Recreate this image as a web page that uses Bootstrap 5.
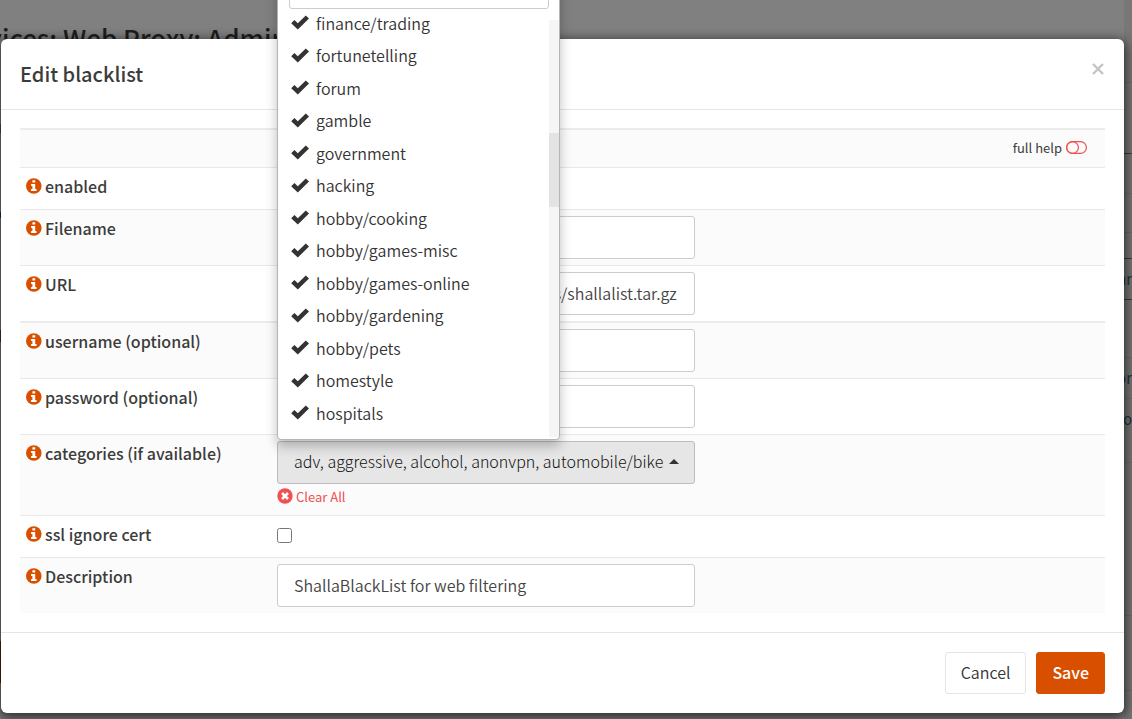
<!DOCTYPE html>
<html lang="en">
<head>
<meta charset="utf-8">
<meta name="viewport" content="width=device-width, initial-scale=1">
<title>Services: Web Proxy: Administration</title>
<link href="https://cdn.jsdelivr.net/npm/bootstrap@5.3.0/dist/css/bootstrap.min.css" rel="stylesheet">
<style>
  body { font-family: "Source Sans Pro", "Noto Sans CJK SC", sans-serif; font-size: 16px; line-height: 24px; font-weight: 350; color: #3c3c3b; background: #808080; overflow: hidden; }
  /* dimmed page under the dialog */
  .under { position: absolute; inset: 0; overflow: hidden; z-index: 0; }
  .under h1 { font-size: 26px; line-height: 32px; font-weight: 500; color: #1e1e1e; margin: 22px 0 0; white-space: nowrap; display: flex; }
  .under h1 span { margin-left: -54px; }
  .edge { position: absolute; top: 0; bottom: 0; display: flex; flex-direction: column; }
  .edge-l { left: 0; width: 8px; }
  .edge-r { right: 0; width: 8px; font-size: 15px; line-height: 20px; font-weight: 400; background: #787877; }
  .edge-r div { border-bottom: 1px solid #6d6d6d; display: flex; align-items: center; justify-content: flex-end; overflow: hidden; color: #28333f; flex-shrink: 0; }
  .edge-r .strong-line { border-bottom-color: #3c3c3c; }
  .dialog { position: relative; z-index: 1; margin: 39px 8px 6px 1px; background: #fff; border-radius: 6px; box-shadow: 0 3px 12px 2px rgba(0,0,0,.65); }
  .dialog-head { padding: 19px; height: 71px; border-bottom: 1px solid #e5e5e5; }
  .dialog-head h2 { font-size: 20px; line-height: 32px; font-weight: 500; margin: 0; }
  .x-btn { border: 0; background: none; padding: 0; line-height: 0; margin: 5px 1px 0 0; }
  .dialog-main { padding: 18px 19px 19px; }
  .form-grid { margin: 0; color: #3c3c3b; --bs-table-color: #3c3c3b; table-layout: fixed; border-top: 2px solid #ebebeb; }
  .form-grid td, .form-grid th { border: 0; border-top: 1px solid #e8e8e8; padding: 6px; vertical-align: top; font-weight: 350; box-shadow: none; background: #fff; }
  .form-grid th { font-weight: 500; }
  .form-grid tr:nth-child(odd) > * { background: #fbfbfb; }
  .form-grid tr:first-child > * { border-top: 0; padding: 6px 18px; height: 38px; line-height: 20px; }
  .form-grid .group-start > * { border-top: 2px solid #ebebeb; }
  .form-grid .c1 { width: 251px; }
  .form-grid th label { display: flex; align-items: center; gap: 3px; line-height: 24px; }
  .slim { height: 42px; }
  .help { font-size: 13px; color: #3c3c3b; text-decoration: none; line-height: 20px; display: inline-flex; align-items: center; gap: 4px; font-weight: 400; }
  .help svg { margin-top: -2px; }
  .field { width: 418px; max-width: 100%; height: 43px; padding: 6px 16px; border: 1px solid #ccc; border-radius: 3px; font-size: 16px; color: #444; font-weight: 350; }
  .picker { position: relative; width: 418px; max-width: 100%; }
  .picker-btn { width: 100%; height: 43px; border: 1px solid #bdbdbd; background: #e6e6e6; color: #111; border-radius: 3px; padding: 0 15px 2px 16px; display: flex; align-items: center; gap: 5px; font-size: 16px; font-weight: 300; }
  .picker-btn > span { flex: 1; overflow: hidden; white-space: nowrap; text-align: left; }
  .clear { font-size: 13px; line-height: 22px; color: #f05050; text-decoration: none; display: flex; align-items: center; gap: 3px; margin-top: 2px; font-weight: 400; }
  .clear svg { margin-top: -2px; }
  .tick { width: 15px; height: 15px; margin: 6px 0 0; display: block; }
  .drop { position: absolute; left: 0; bottom: calc(100% + 1px); width: 283px; background: #fff; border: 1px solid #b5b5b5; border-radius: 4px; box-shadow: 0 6px 12px rgba(0,0,0,.25); z-index: 5; padding: 8px 0 1px; }
  .drop .field { display: block; margin: 0 10px 0 11px; width: calc(100% - 21px); }
  .drop-body { display: flex; height: 429px; overflow: hidden; }
  .drop-list { flex: 1; list-style: none; margin: -2px 0 0; padding: 0 0 0 13px; height: 455px; display: grid; grid-template-rows: repeat(14, 1fr); }
  .drop-list a { display: flex; align-items: center; gap: 7px; height: 100%; color: #333; text-decoration: none; line-height: 24px; }
  .track { width: 10px; background: #f5f5f5; margin: 11px 0 1px; padding-top: 113px; }
  .thumb { height: 74px; background: #e3e3e3; }
  .dialog-foot { border-top: 1px solid #e5e5e5; padding: 19px; display: flex; justify-content: flex-end; gap: 10px; }
  .act { height: 42px; border-radius: 3px; font-size: 16px; padding: 0 15px 2px; border: 1px solid #e5e5e5; background: #fff; color: #333; font-weight: 350; }
  .act-main { background: #d94f00; border-color: #d94f00; color: #fff; font-weight: 500; }
</style>
</head>
<body>
<svg width="0" height="0" class="position-absolute" aria-hidden="true">
  <symbol id="info" viewBox="0 0 16 16"><circle cx="7.8" cy="8" r="7.8" fill="#d94f00"/><path d="M6.4 2.2h2.8v2.3H6.4zM5.1 6h4.1v4.9h1.3v2H5.1v-2h1.3V8H5.1z" fill="#fff"/></symbol>
  <symbol id="ok" viewBox="0 0 18 15"><path d="M0.2 8.2 3.4 5l3.4 3.3L14.8.4 18 3.4 6.8 14.6z" fill="#333"/></symbol>
</svg>

<div class="under" aria-hidden="true">
  <h1><span>Services: Web Proxy: Administration</span></h1>
  <div class="edge edge-l">
    <div style="height:124px"></div><div style="height:9px;background:#6b4a20"></div>
    <div style="height:79px"></div><div style="height:6px;background:#103a60"></div>
    <div style="height:112px"></div><div style="height:12px;background:#5a2c0c"></div>
    <div style="height:299px"></div><div style="height:42px;background:#5a2200"></div>
  </div>
  <div class="edge edge-r">
    <div style="height:83px"></div><div class="strong-line" style="height:71px"></div>
    <div style="height:40px"></div><div style="height:39px"></div>
    <div class="strong-line" style="height:26px"></div><div class="strong-line" style="height:41px">ar</div>
    <div style="height:58px"></div><div style="height:41px">or</div>
    <div style="height:64px"><span class="pb-4">o</span></div><div style="height:153px"></div><div style="height:75px"></div>
  </div>
</div>

<main class="dialog" role="dialog" aria-labelledby="dlg-title">
  <header class="dialog-head d-flex justify-content-between align-items-start">
    <h2 id="dlg-title">Edit blacklist</h2>
    <button type="button" class="x-btn" aria-label="Close"><svg width="12" height="12" viewBox="0 0 12 12"><path d="M1 1l10 10M11 1L1 11" stroke="#c4c4c4" stroke-width="2.4"/></svg></button>
  </header>
  <div class="dialog-main">
    <table class="table form-grid">
      <colgroup><col class="c1"><col></colgroup>
      <tbody>
        <tr><td colspan="2" class="text-end"><a href="#" class="help">full help <svg width="21" height="13" viewBox="0 0 21 13" fill="none" stroke="#f05050" stroke-width="1.2"><rect x=".6" y=".6" width="19.8" height="11.8" rx="5.9"/><circle cx="6.5" cy="6.5" r="5.9"/></svg></a></td></tr>
        <tr class="slim"><th><label for="en"><svg width="16" height="16"><use href="#info"/></svg>enabled</label></th><td><input id="en" type="checkbox" class="tick" checked></td></tr>
        <tr><th><label for="fn"><svg width="16" height="16"><use href="#info"/></svg>Filename</label></th><td><input id="fn" type="text" class="field"></td></tr>
        <tr><th><label for="url"><svg width="16" height="16"><use href="#info"/></svg>URL</label></th><td><input id="url" type="text" class="field" value="http://www.shallalist.de/Downloads/shallalist.tar.gz"></td></tr>
        <tr class="group-start"><th><label for="us"><svg width="16" height="16"><use href="#info"/></svg>username (optional)</label></th><td><input id="us" type="text" class="field"></td></tr>
        <tr><th><label for="pw"><svg width="16" height="16"><use href="#info"/></svg>password (optional)</label></th><td><input id="pw" type="password" class="field"></td></tr>
        <tr><th><label for="cat"><svg width="16" height="16"><use href="#info"/></svg>categories (if available)</label></th><td>
          <div class="picker">
            <button id="cat" type="button" class="picker-btn"><span>adv, aggressive, alcohol, anonvpn, automobile/bikes</span><svg width="10" height="5" viewBox="0 0 10 5"><path d="M0 5 5 0l5 5z" fill="#333"/></svg></button>
            <div class="drop">
              <input type="text" class="field" aria-label="Search">
              <div class="drop-body">
                <ul class="drop-list">
                  <li><a href="#"><svg width="18" height="15"><use href="#ok"/></svg>finance/trading</a></li>
                  <li><a href="#"><svg width="18" height="15"><use href="#ok"/></svg>fortunetelling</a></li>
                  <li><a href="#"><svg width="18" height="15"><use href="#ok"/></svg>forum</a></li>
                  <li><a href="#"><svg width="18" height="15"><use href="#ok"/></svg>gamble</a></li>
                  <li><a href="#"><svg width="18" height="15"><use href="#ok"/></svg>government</a></li>
                  <li><a href="#"><svg width="18" height="15"><use href="#ok"/></svg>hacking</a></li>
                  <li><a href="#"><svg width="18" height="15"><use href="#ok"/></svg>hobby/cooking</a></li>
                  <li><a href="#"><svg width="18" height="15"><use href="#ok"/></svg>hobby/games-misc</a></li>
                  <li><a href="#"><svg width="18" height="15"><use href="#ok"/></svg>hobby/games-online</a></li>
                  <li><a href="#"><svg width="18" height="15"><use href="#ok"/></svg>hobby/gardening</a></li>
                  <li><a href="#"><svg width="18" height="15"><use href="#ok"/></svg>hobby/pets</a></li>
                  <li><a href="#"><svg width="18" height="15"><use href="#ok"/></svg>homestyle</a></li>
                  <li><a href="#"><svg width="18" height="15"><use href="#ok"/></svg>hospitals</a></li>
                </ul>
                <div class="track"><div class="thumb"></div></div>
              </div>
            </div>
          </div>
          <a href="#" class="clear"><svg width="16" height="16" viewBox="0 0 16 16"><circle cx="8" cy="8" r="7.7" fill="#f05050"/><path d="M5 5l6 6M11 5l-6 6" stroke="#fff" stroke-width="2.6"/></svg>Clear All</a>
          <div class="pt-0" style="height:1px"></div>
        </td></tr>
        <tr class="slim"><th><label for="ssl"><svg width="16" height="16"><use href="#info"/></svg>ssl ignore cert</label></th><td><input id="ssl" type="checkbox" class="tick"></td></tr>
        <tr><th><label for="ds"><svg width="16" height="16"><use href="#info"/></svg>Description</label></th><td><input id="ds" type="text" class="field" value="ShallaBlackList for web filtering"></td></tr>
      </tbody>
    </table>
  </div>
  <footer class="dialog-foot">
    <button type="button" class="act">Cancel</button>
    <button type="button" class="act act-main">Save</button>
  </footer>
</main>
<script src="https://cdn.jsdelivr.net/npm/bootstrap@5.3.0/dist/js/bootstrap.bundle.min.js"></script>
</body>
</html>
